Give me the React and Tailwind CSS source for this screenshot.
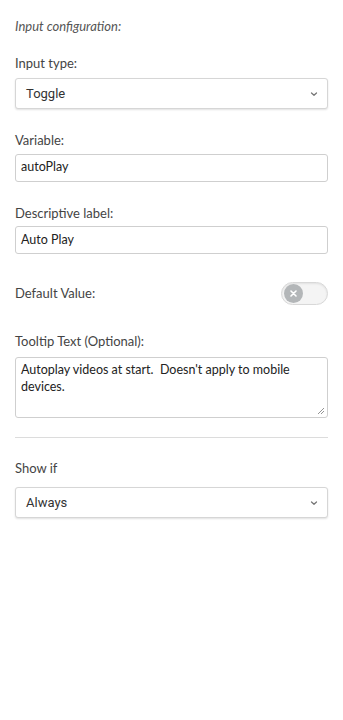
import React from "react";

function Chevron() {
  return (
    <svg width="8" height="8" viewBox="0 0 8 8" className="text-[#777]">
      <path d="M1.5 3 L4 5.3 L6.5 3" fill="none" stroke="currentColor" strokeWidth="1.3" strokeLinecap="round" strokeLinejoin="round" />
    </svg>
  );
}

function Select({ value }) {
  return (
    <div className="flex h-[31px] items-center justify-between rounded-[3px] border border-[#d6d6d6] bg-white pl-[10px] pr-[9px] shadow-[0_1px_2px_rgba(0,0,0,0.12)]">
      <span className="font-['Roboto',sans-serif] text-[13px] text-[#333]">{value}</span>
      <Chevron />
    </div>
  );
}

function Input({ value }) {
  return (
    <div className="flex h-[28px] items-center rounded-[3px] border border-[#cfcfcf] bg-white px-[5px] text-[12.5px] text-[#222]">
      {value}
    </div>
  );
}

function Label({ children, className = "" }) {
  return <div className={"text-[13px] text-[#444] " + className}>{children}</div>;
}

export default function App() {
  return (
    <div className="min-h-[720px] w-[343px] bg-white px-[15px] pt-[17px] font-['Lato',sans-serif]">
      <div className="text-[13px] italic text-[#555]">Input configuration:</div>

      <Label className="mt-[17px] mb-[5px]">Input type:</Label>
      <Select value="Toggle" />

      <Label className="mt-[22px] mb-[3px]">Variable:</Label>
      <Input value="autoPlay" />

      <Label className="mt-[22px] mb-[3px]">Descriptive label:</Label>
      <Input value="Auto Play" />

      <div className="mt-[28px] flex items-center justify-between">
        <Label>Default Value:</Label>
        <div className="flex h-[23px] w-[47px] items-center rounded-full border border-[#d8d8d8] bg-[#f4f4f4] pl-[2px] shadow-[inset_0_1px_2px_rgba(0,0,0,0.08)]">
          <div className="flex h-[19px] w-[19px] items-center justify-center rounded-full bg-[#b3b6b8]">
            <svg width="7" height="7" viewBox="0 0 7 7">
              <path d="M1 1 L6 6 M6 1 L1 6" stroke="white" strokeWidth="1.6" strokeLinecap="round" />
            </svg>
          </div>
        </div>
      </div>

      <Label className="mt-[27px] mb-[5px]">Tooltip Text (Optional):</Label>
      <div className="relative h-[61px] rounded-[3px] border border-[#cfcfcf] bg-white px-[5px] pt-[3px] text-[12.5px] leading-[17px] text-[#222]">
        Autoplay videos at start.&nbsp; Doesn't apply to mobile devices.
        <svg className="absolute bottom-[2px] right-[2px]" width="8" height="8" viewBox="0 0 8 8">
          <path d="M7 1 L1 7 M7 4 L4 7" stroke="#888" strokeWidth="0.9" />
        </svg>
      </div>

      <div className="mt-[19px] border-t border-[#dcdcdc]" />

      <Label className="mt-[21px] mb-[9px]">Show if</Label>
      <Select value="Always" />
    </div>
  );
}
